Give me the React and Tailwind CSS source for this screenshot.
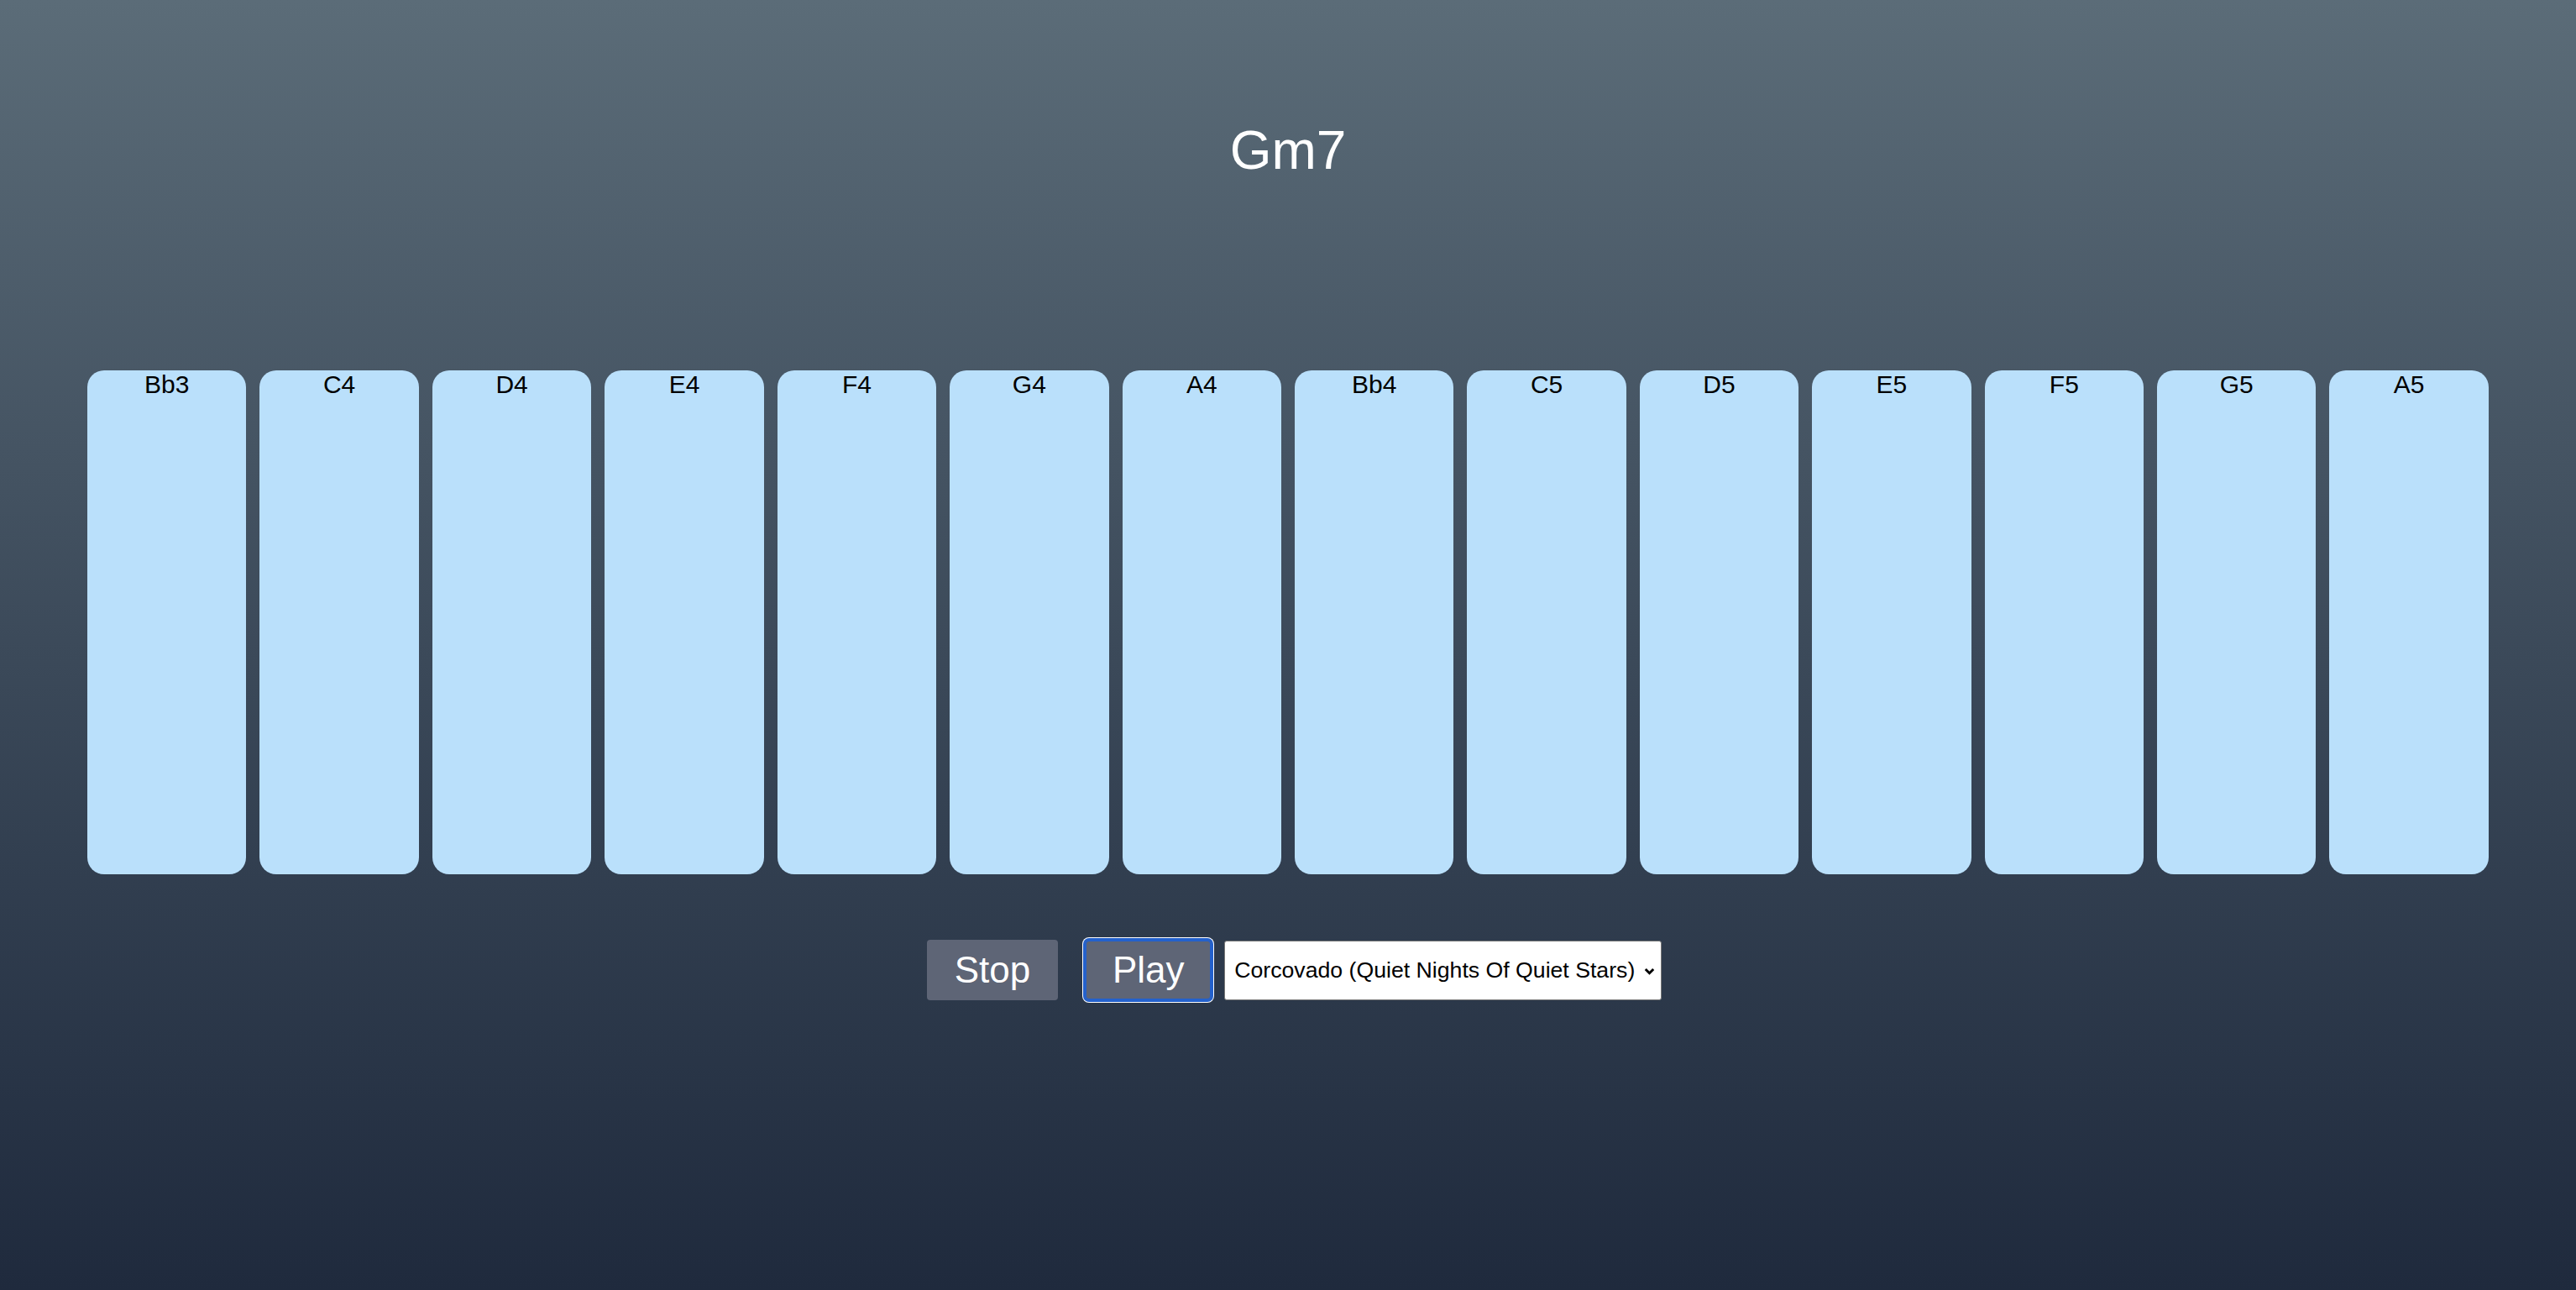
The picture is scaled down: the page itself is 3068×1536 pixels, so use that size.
const notes = ['Bb3', 'C4', 'D4', 'E4', 'F4', 'G4', 'A4', 'Bb4', 'C5', 'D5', 'E5', 'F5', 'G5', 'A5'];

export default function App() {
  return (
    <div className="min-h-screen flex flex-col items-center bg-gradient-to-b from-[#5b6c78] to-[#1f2a3d] font-['Liberation_Sans',Arial,sans-serif]">
      <h1 className="mt-[142px] text-[64px] leading-[normal] text-white">Gm7</h1>

      <div className="mt-[225px] w-full flex gap-[16px] px-[104px]">
        {notes.map((n) => (
          <div key={n} className="flex-1 h-[600px] rounded-[20px] bg-[#bae0fb] text-center text-[30px] leading-[normal] text-black">
            {n}
          </div>
        ))}
      </div>

      <div className="mt-[78px] flex items-center justify-center pl-[15px]">
        <button className="h-[72px] px-[33px] rounded-[4px] bg-[#5e6576] text-[44px] leading-[normal] text-white">Stop</button>
        <button className="ml-[32px] h-[72px] w-[151px] rounded-[5px] bg-[#5e6576] text-[44px] leading-[normal] text-white shadow-[inset_0_0_0_2px_#2461cc,0_0_0_2px_#2461cc,0_0_0_3px_#ffffff]">Play</button>
        <div className="relative ml-[15px]">
          <select className="appearance-none w-[521px] h-[71px] pl-[11px] pr-[30px] rounded-[3px] border border-[#767676] bg-white text-[26.67px] text-black">
            <option>Corcovado (Quiet Nights Of Quiet Stars)</option>
          </select>
          <svg className="absolute right-[8px] top-[32px] pointer-events-none" width="13" height="10" viewBox="0 0 13 10">
            <path d="M1.8 2 L6.5 6.7 L11.2 2" fill="none" stroke="#000" strokeWidth="3" />
          </svg>
        </div>
      </div>
    </div>
  );
}
